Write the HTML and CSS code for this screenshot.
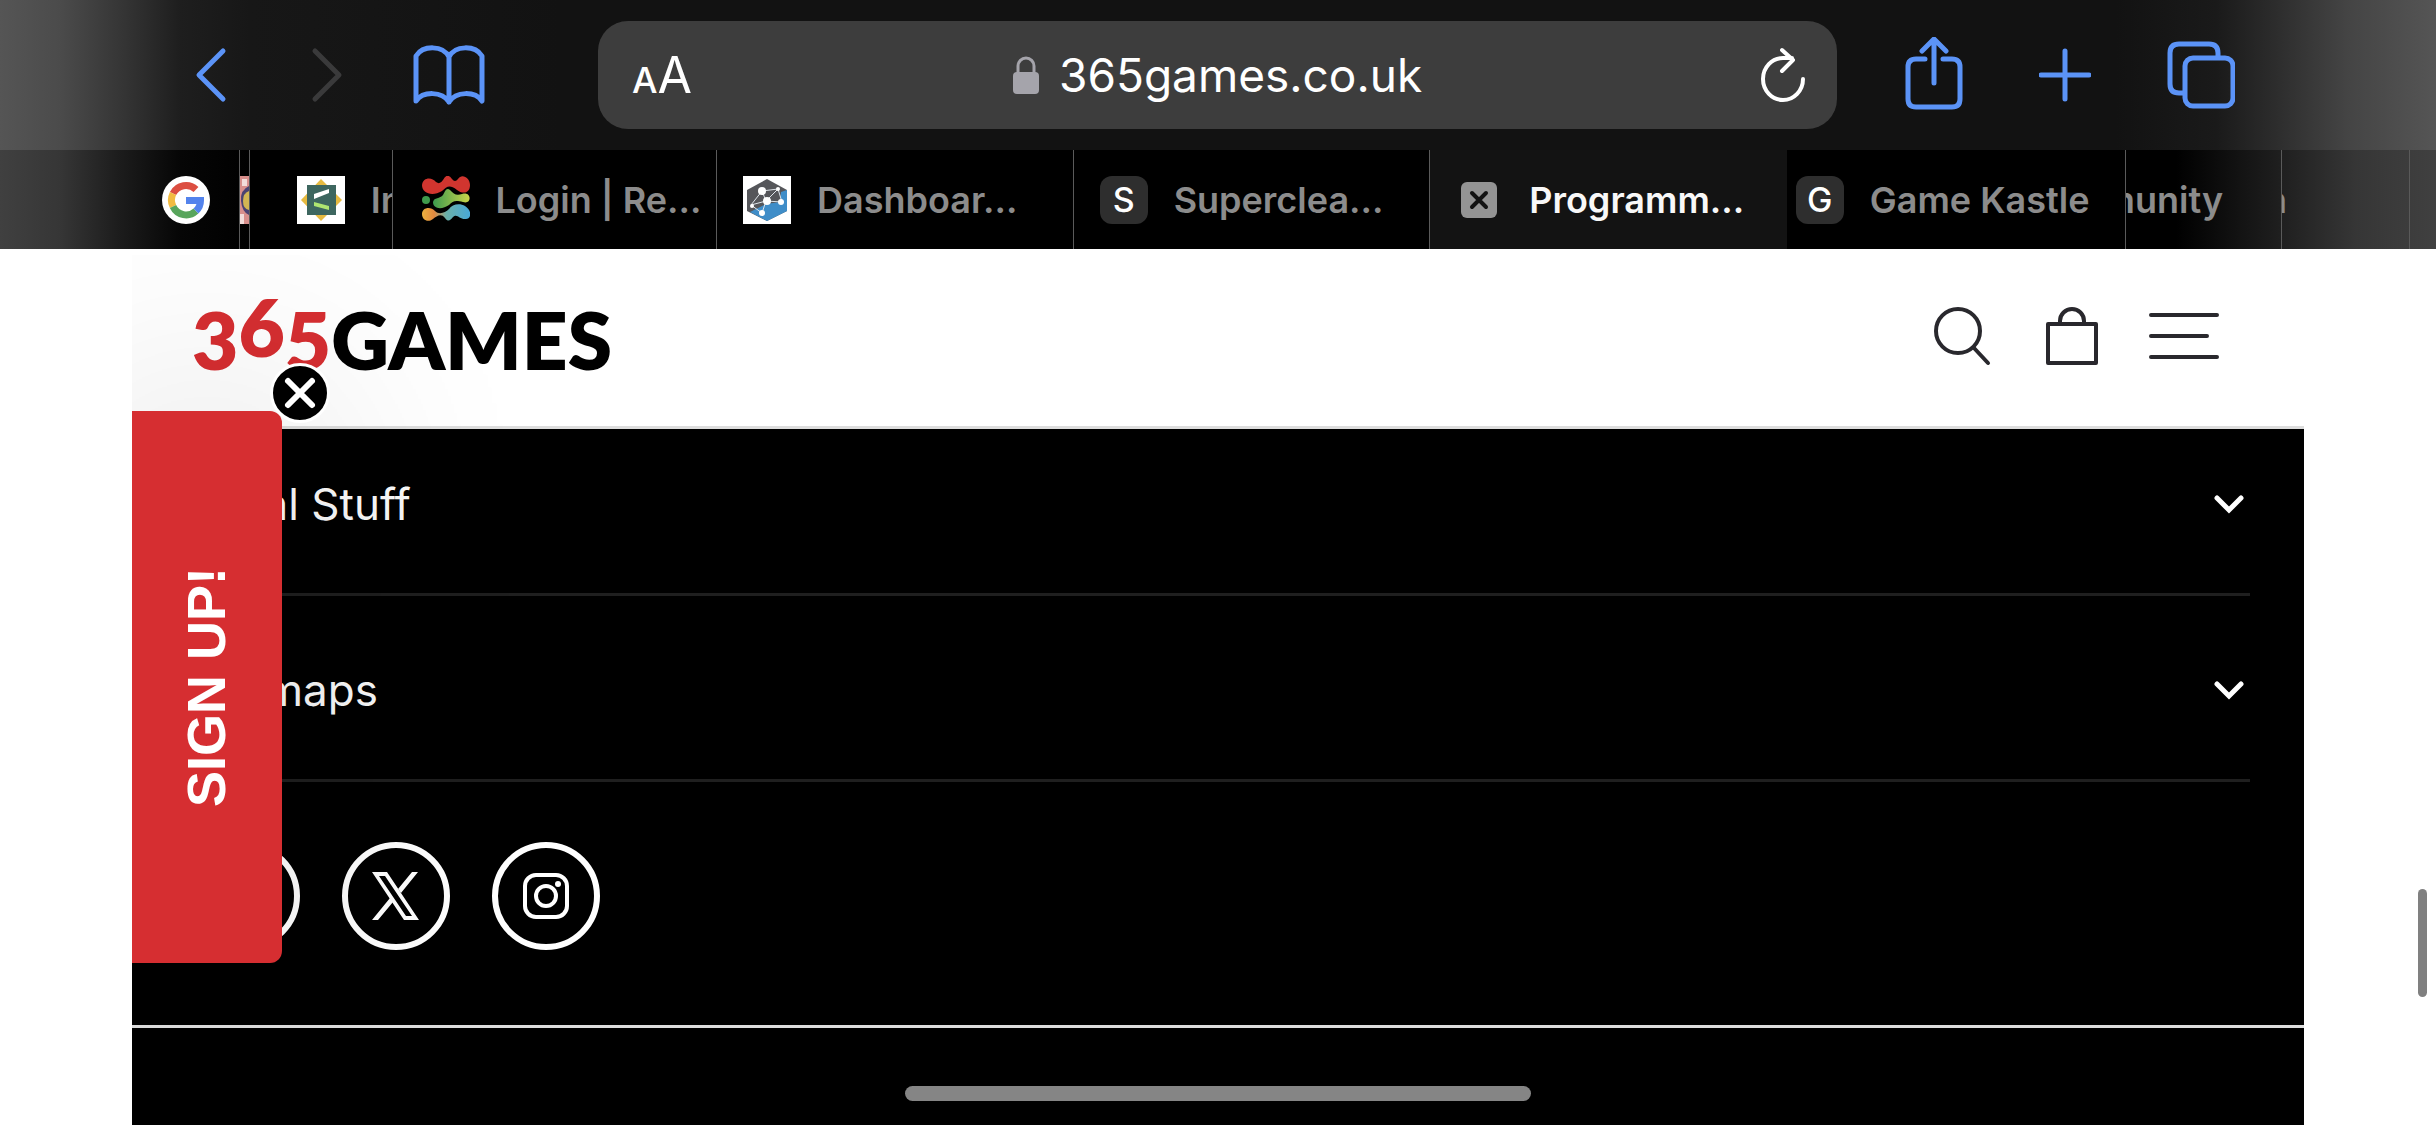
FILE: index.html
```html
<!DOCTYPE html>
<html lang="en">
  <head>
    <meta charset="utf-8" />
    <title>365games.co.uk</title>
    <link rel="stylesheet" href="styles.css" />
  </head>
  <body>
    <div class="toolbar">
      <div class="nav">
        <button class="back" aria-label="Back">
          <svg width="32" height="56" viewBox="0 0 32 56"><path d="M28 4L4 28l24 24" /></svg>
        </button>
        <button class="forward" aria-label="Forward" disabled>
          <svg width="32" height="56" viewBox="0 0 32 56"><path d="M4 4l24 24L4 52" /></svg>
        </button>
        <button class="book" aria-label="Bookmarks">
          <svg width="72" height="60" viewBox="0 0 72 60">
            <path d="M36 57V12C30 0 10 0 3 11v45c7-10 26-10 33 1c7-11 26-11 33-1V11C62 0 42 0 36 12" />
          </svg>
        </button>
      </div>
      <div class="address">
        <button class="reader" aria-label="Page settings"><small>A</small>A</button>
        <label class="site">
          <svg width="26" height="38" viewBox="0 0 26 38">
            <path d="M5 18V10a8 8 0 0 1 16 0v8" fill="none" stroke="#a5a4ab" stroke-width="3" />
            <rect y="16" width="26" height="22" rx="4" fill="#a5a4ab" />
          </svg>
          <input type="text" value="365games.co.uk" aria-label="Address" />
        </label>
        <button class="reload" aria-label="Reload">
          <svg width="46" height="56" viewBox="0 0 46 56">
            <path d="M43 32a20 21 0 1 1-20-21h9M22 3l11 10-11 11" />
          </svg>
        </button>
      </div>
      <div class="actions">
        <button aria-label="Share">
          <svg width="58" height="76" viewBox="0 0 58 76">
            <path d="M20 22h-9q-8 0-8 8v32q0 8 8 8h36q8 0 8-8V30q0-8-8-8h-9M29 46V3M17 14L29 2l12 12" />
          </svg>
        </button>
        <button aria-label="New tab">
          <svg width="52" height="54" viewBox="0 0 52 54"><path d="M26 3v48M2 27h48" /></svg>
        </button>
        <button aria-label="Show tabs">
          <svg width="68" height="68" viewBox="0 0 68 68">
            <path d="M17 52h-5q-9 0-9-9V12q0-9 9-9h30q9 0 9 9v4" />
            <rect x="18" y="17" width="48" height="48" rx="8" />
          </svg>
        </button>
      </div>
    </div>

    <div class="tabs">
      <a class="tab pinned" href="#" aria-label="Google">
        <svg class="favicon" viewBox="0 0 48 48">
          <circle cx="24" cy="24" r="24" fill="#fff" />
          <g fill="none" stroke-width="7">
            <path d="M34 13.500A14.500 14.500 0 0 0 11 17.500" stroke="#dc4e41" />
            <path d="M11 17.500a14.500 14.500 0 0 0 0 13" stroke="#f2bb41" />
            <path d="M11 30.500a14.500 14.500 0 0 0 23 4.500" stroke="#58a55c" />
            <path d="M34 35a14.500 14.500 0 0 0 4.500-10.500H24" stroke="#5383ec" />
          </g>
        </svg>
      </a>
      <a class="tab sliver" href="#" aria-label="Tab">
        <svg width="9" height="48" viewBox="0 0 9 48">
          <rect width="9" height="48" fill="#d88f8c" />
          <path d="M2 3h5v7H2zM0 38h4v10H0z" fill="#f2dcda" />
          <path d="M9 10Q0 14 1 25t8 14z" fill="#4a4272" />
          <path d="M9 15q-6 2-6 10t6 9z" fill="#d2b553" />
        </svg>
      </a>
      <a class="tab first" href="#">
        <svg class="favicon" viewBox="0 0 48 48">
          <rect width="48" height="48" fill="#fff" />
          <path d="M24 3l21 21-21 21L4 24z" fill="#e6ba40" />
          <rect x="10" y="9" width="29" height="30" fill="#3d665f" />
          <path d="M17 18l15-5v4l-15 6z" fill="#fff" />
          <path d="M17 26l15 4v4l-15-4z" fill="#aee571" />
        </svg>
        <span>In</span>
      </a>
      <a class="tab login" href="#">
        <svg class="favicon" viewBox="0 0 48 48">
          <defs>
            <linearGradient id="leaf"><stop offset="0" stop-color="#3c9a4e" /><stop offset="1" stop-color="#cbd64b" /></linearGradient>
            <linearGradient id="sea"><stop offset="0" stop-color="#ecb13f" /><stop offset=".25" stop-color="#e3893f" /><stop offset=".5" stop-color="#6bb0a8" /><stop offset="1" stop-color="#48a8d8" /></linearGradient>
          </defs>
          <path d="M0 9C1 1 10 1 14 6q4 3 7-2 4-8 9-1 3 4 6 0c4-6 12-1 12 6 0 9-8 9-13 5-8-6-10-3-15 1C10 21 0 17 0 9z" fill="#d1352f" />
          <circle cx="4" cy="24" r="4" fill="#3f9a4c" />
          <path d="M11 26c1-5 7-3 10-7 2-3 3-8 7-5 4 4 6 6 12 4 10-3 10 11 1 8-8-2-10-1-14 3-7 5-16 4-16-3z" fill="url(#leaf)" />
          <path d="M0 38c0-7 9-8 13-3 4 4 10 2 14-2 3-5 11-6 16-3 8 5 6 14 0 13-6 0-8-6-12-2-3 4-5 5-8 1-4-5-8-2-12 1-5 4-11 1-11-5z" fill="url(#sea)" />
        </svg>
        <span>Login | Re...</span>
      </a>
      <a class="tab" href="#">
        <svg class="favicon" viewBox="0 0 48 48">
          <rect width="48" height="48" fill="#fff" />
          <path d="M24 3l20 11v21L24 45 4 35V14z" fill="#55565a" />
          <path d="M38 16l6-2v21L24 45 7 36l16-8 14-2z" fill="#3f8dc8" />
          <path d="M8 29l11-14 16-2 4 13-16-1-4-10M8 29l15-4-4 12L8 29M23 25l12-12" fill="none" stroke="#dfe5ea" stroke-width="1" />
          <g fill="#fff"><circle cx="19" cy="15" r="4" /><circle cx="24" cy="25" r="4" /><circle cx="35" cy="13" r="2" /><circle cx="38" cy="26" r="3" /><circle cx="9" cy="30" r="2" /><circle cx="19" cy="37" r="3" /></g>
        </svg>
        <span>Dashboar...</span>
      </a>
      <a class="tab" href="#">
        <b class="favicon letter">S</b>
        <span>Superclea...</span>
      </a>
      <div class="tab active">
        <button class="close-tab" aria-label="Close tab">
          <svg width="36" height="36" viewBox="0 0 36 36"><path d="M11 11l14 14M25 11L11 25" /></svg>
        </button>
        <span>Programm...</span>
      </div>
      <a class="tab next" href="#">
        <b class="favicon letter">G</b>
        <span>Game Kastle</span>
      </a>
      <a class="tab cut community" href="#"><span>munity</span></a>
      <a class="tab cut" href="#"><span>n</span></a>
      <a class="tab" href="#" aria-label="Tab"></a>
    </div>

    <div class="page">
      <header>
        <a class="logo" href="#"><em>3<sup>6</sup>5</em>GAMES</a>
        <div class="menu">
          <button aria-label="Search">
            <svg width="62" height="60" viewBox="0 0 62 60"><circle cx="24" cy="25" r="22" /><path d="M40 42l14 15" /></svg>
          </button>
          <button aria-label="Basket">
            <svg width="52" height="60" viewBox="0 0 52 60"><path d="M2 18h48v39H2zM14 18v-3a12 12 0 0 1 24 0v3" /></svg>
          </button>
          <button aria-label="Menu">
            <svg width="72" height="60" viewBox="0 0 72 60"><path d="M3 9h66M3 30h56M3 51h66" /></svg>
          </button>
        </div>
      </header>

      <footer>
        <div class="links">
          <button class="row">
            Legal Stuff
            <svg width="30" height="20" viewBox="0 0 30 20"><path d="M3 4l12 12L27 4" /></svg>
          </button>
          <button class="row">
            Sitemaps
            <svg width="30" height="20" viewBox="0 0 30 20"><path d="M3 4l12 12L27 4" /></svg>
          </button>
          <div class="social">
            <a href="#" aria-label="Facebook">
              <svg width="48" height="48" viewBox="0 0 48 48"><path d="M32 4h-4q-8 0-8 8v32M12 22h18" fill="none" stroke="#fff" stroke-width="4" /></svg>
            </a>
            <a href="#" aria-label="X">
              <svg width="48" height="48" viewBox="0 0 48 48">
                <path d="M0 0h15l32 48H32zM7 4l27 40h6L13 4z" fill="#fff" fill-rule="evenodd" />
                <path d="M40 0h6L29 21l-3-4zM18 26l3 4L6 48H0z" fill="#fff" />
              </svg>
            </a>
            <a href="#" aria-label="Instagram">
              <svg width="48" height="48" viewBox="0 0 48 48">
                <rect x="3" y="3" width="42" height="42" rx="11" fill="none" stroke="#fff" stroke-width="4" />
                <circle cx="24" cy="24" r="10" fill="none" stroke="#fff" stroke-width="4" />
                <circle cx="36" cy="12" r="3" fill="#fff" />
              </svg>
            </a>
          </div>
        </div>
      </footer>

      <!-- newsletter teaser, sits over the page -->
      <div class="teaser">
        <button class="signup"><span>SIGN UP!</span></button>
        <button class="dismiss" aria-label="Close teaser">
          <svg width="54" height="54" viewBox="0 0 54 54"><path d="M15 15l24 24M39 15L15 39" /></svg>
        </button>
      </div>
    </div>

    <div class="scrollbar"></div>
    <div class="home-bar"></div>
  </body>
</html>
```
FILE: styles.css
```css
* {
  box-sizing: border-box;
}

body {
  margin: 0;
  height: 100vh;
  display: flex;
  flex-direction: column;
  overflow: hidden;
  background-color: #fff;
  font-family: Inter, "Liberation Sans", sans-serif;
}

button {
  padding: 0;
  border: none;
  background: none;
  font-family: inherit;
  color: inherit;
  cursor: pointer;
}

a {
  color: inherit;
  text-decoration: none;
}

svg {
  display: block;
  flex: none;
}

/* browser toolbar */
.toolbar {
  display: flex;
  align-items: center;
  height: 150px;
  padding: 0 201px 0 195px;
  background: linear-gradient(
    to right,
    #555 0,
    #4b4b4b 60px,
    #343434 125px,
    #1e1e1e 180px,
    #171717 250px,
    #121212 560px,
    #121212 calc(100% - 320px),
    #1a1a1a calc(100% - 220px),
    #2b2b2b calc(100% - 165px),
    #444 calc(100% - 90px),
    #555 100%
  );
}

.nav,
.actions {
  display: flex;
  align-items: center;
}

.nav svg,
.actions svg {
  fill: none;
  stroke: #5b93f7;
  stroke-width: 5;
  stroke-linecap: round;
  stroke-linejoin: round;
}

.nav .forward {
  margin: 0 70px 0 84px;
}

.nav .forward svg {
  stroke: #3a3a3b;
}

.actions {
  gap: 76px;
}

.address {
  flex: 1;
  display: grid;
  grid-template-columns: 1fr auto 1fr;
  align-items: center;
  height: 108px;
  margin: 0 68px 0 113px;
  padding: 0 31px 0 34px;
  border-radius: 30px;
  background-color: #3d3d3d;
  color: #fff;
}

.reader {
  justify-self: start;
  font-size: 50px;
}

.reader small {
  font-size: 36px;
  font-weight: 500;
}

.site {
  display: flex;
  align-items: center;
  gap: 20px;
}

.site input {
  width: 366px;
  padding: 0;
  border: none;
  background: none;
  color: #fff;
  font-family: inherit;
  font-size: 46px;
}

.reload {
  justify-self: end;
}

.reload svg {
  fill: none;
  stroke: #fff;
  stroke-width: 4;
  stroke-linecap: round;
  stroke-linejoin: round;
}

/* tab strip */
.tabs {
  display: grid;
  grid-template-columns: 240fr 10fr 143fr 325fr 357fr 357fr 357fr 340fr 156fr 128fr 23fr;
  height: 99px;
  background: linear-gradient(
    to right,
    #404040 0,
    #363636 60px,
    #1c1c1c 120px,
    #060606 180px,
    #000 250px,
    #000 calc(100% - 260px),
    #1c1c1c calc(100% - 165px),
    #363636 calc(100% - 80px),
    #404040 100%
  );
  color: #8c8c8c;
  font-size: 36px;
  font-weight: 600;
}

.tab {
  display: flex;
  align-items: center;
  gap: 26px;
  min-width: 0;
  padding-left: 26px;
  border-right: 1px solid #5a5a5a;
  overflow: hidden;
  white-space: nowrap;
}

.tab:last-child {
  border: none;
}

.favicon {
  flex: none;
  width: 48px;
  height: 48px;
}

.pinned {
  padding-left: 162px;
}

.sliver {
  padding: 0;
}

.first {
  padding-left: 47px;
}

.login {
  padding-left: 29px;
}

.letter {
  border-radius: 12px;
  background-color: #2e2e2e;
  color: #fff;
  font-size: 34px;
  font-weight: 500;
  line-height: 48px;
  text-align: center;
}

.active {
  gap: 32px;
  padding-left: 31px;
  border: none;
  background-color: #131313;
  color: #f8f8f8;
}

.close-tab {
  border-radius: 6px;
  background-color: #949494;
}

.close-tab svg {
  stroke: #131313;
  stroke-width: 4;
  stroke-linecap: round;
}

.next {
  padding-left: 9px;
}

/* titles scrolled under the previous tab */
.cut {
  justify-content: flex-end;
  padding: 0 122px 0 0;
}

.community {
  padding-right: 58px;
}

/* the shop page */
.page {
  position: relative;
  flex: 1;
  display: flex;
  flex-direction: column;
  margin: 0 132px;
  overflow: hidden;
}

header {
  display: flex;
  align-items: center;
  justify-content: space-between;
  height: 180px;
  padding: 0 84px 4px 60px;
  border-bottom: 3px solid #ddd;
  background-color: #fff;
  z-index: 1;
}

.logo {
  padding-top: 6px;
  color: #000;
  font-family: Lato, sans-serif;
  font-size: 80px;
  font-weight: 800;
  line-height: 96px;
}

.logo em {
  color: #d62e31;
  font-style: normal;
}

.logo sup {
  font-size: 80px;
  line-height: 0;
  vertical-align: 13px;
}

.menu {
  display: flex;
  gap: 50px;
}

.menu svg {
  fill: none;
  stroke: #29282d;
  stroke-width: 4;
  stroke-linecap: round;
  stroke-linejoin: round;
}

footer {
  flex: 1;
  margin-top: -19px;
  background-color: #000;
  color: #fafafa;
}

.links {
  padding: 0 54px 75px;
  border-bottom: 3px solid #ddd;
}

.row {
  display: flex;
  align-items: center;
  justify-content: space-between;
  width: 100%;
  height: 186px;
  padding: 4px 6px 0 0;
  border-bottom: 3px solid #1f1f1f;
  font-size: 44px;
}

.row svg {
  fill: none;
  stroke: #fff;
  stroke-width: 5;
  stroke-linecap: round;
}

.social {
  display: flex;
  gap: 42px;
  padding: 60px 6px 0;
}

.social a {
  display: flex;
  align-items: center;
  justify-content: center;
  width: 108px;
  height: 108px;
  border: 6px solid #fff;
  border-radius: 50%;
}

.teaser {
  position: absolute;
  top: 162px;
  left: 0;
  z-index: 2;
}

.signup {
  display: flex;
  align-items: center;
  justify-content: center;
  width: 150px;
  height: 552px;
  padding-right: 3px;
  border-radius: 0 12px 12px 0;
  background-color: #d62e31;
  box-shadow: 0 0 300px rgba(0, 0, 0, 0.2);
  color: #fff;
  font-family: "Liberation Sans", sans-serif;
  font-size: 54px;
  font-weight: bold;
}

.signup span {
  writing-mode: vertical-rl;
  transform: rotate(180deg);
}

.dismiss {
  position: absolute;
  top: -48px;
  left: 138px;
  border: 3px solid #fff;
  border-radius: 50%;
  background-color: #000;
}

.dismiss svg {
  stroke: #fff;
  stroke-width: 6;
  stroke-linecap: round;
}

.scrollbar {
  position: fixed;
  top: 889px;
  right: 9px;
  width: 9px;
  height: 108px;
  border-radius: 5px;
  background-color: #808080;
}

.home-bar {
  position: fixed;
  bottom: 24px;
  left: 50%;
  width: 626px;
  height: 15px;
  border-radius: 8px;
  background-color: #858585;
  transform: translateX(-50%);
}
```
